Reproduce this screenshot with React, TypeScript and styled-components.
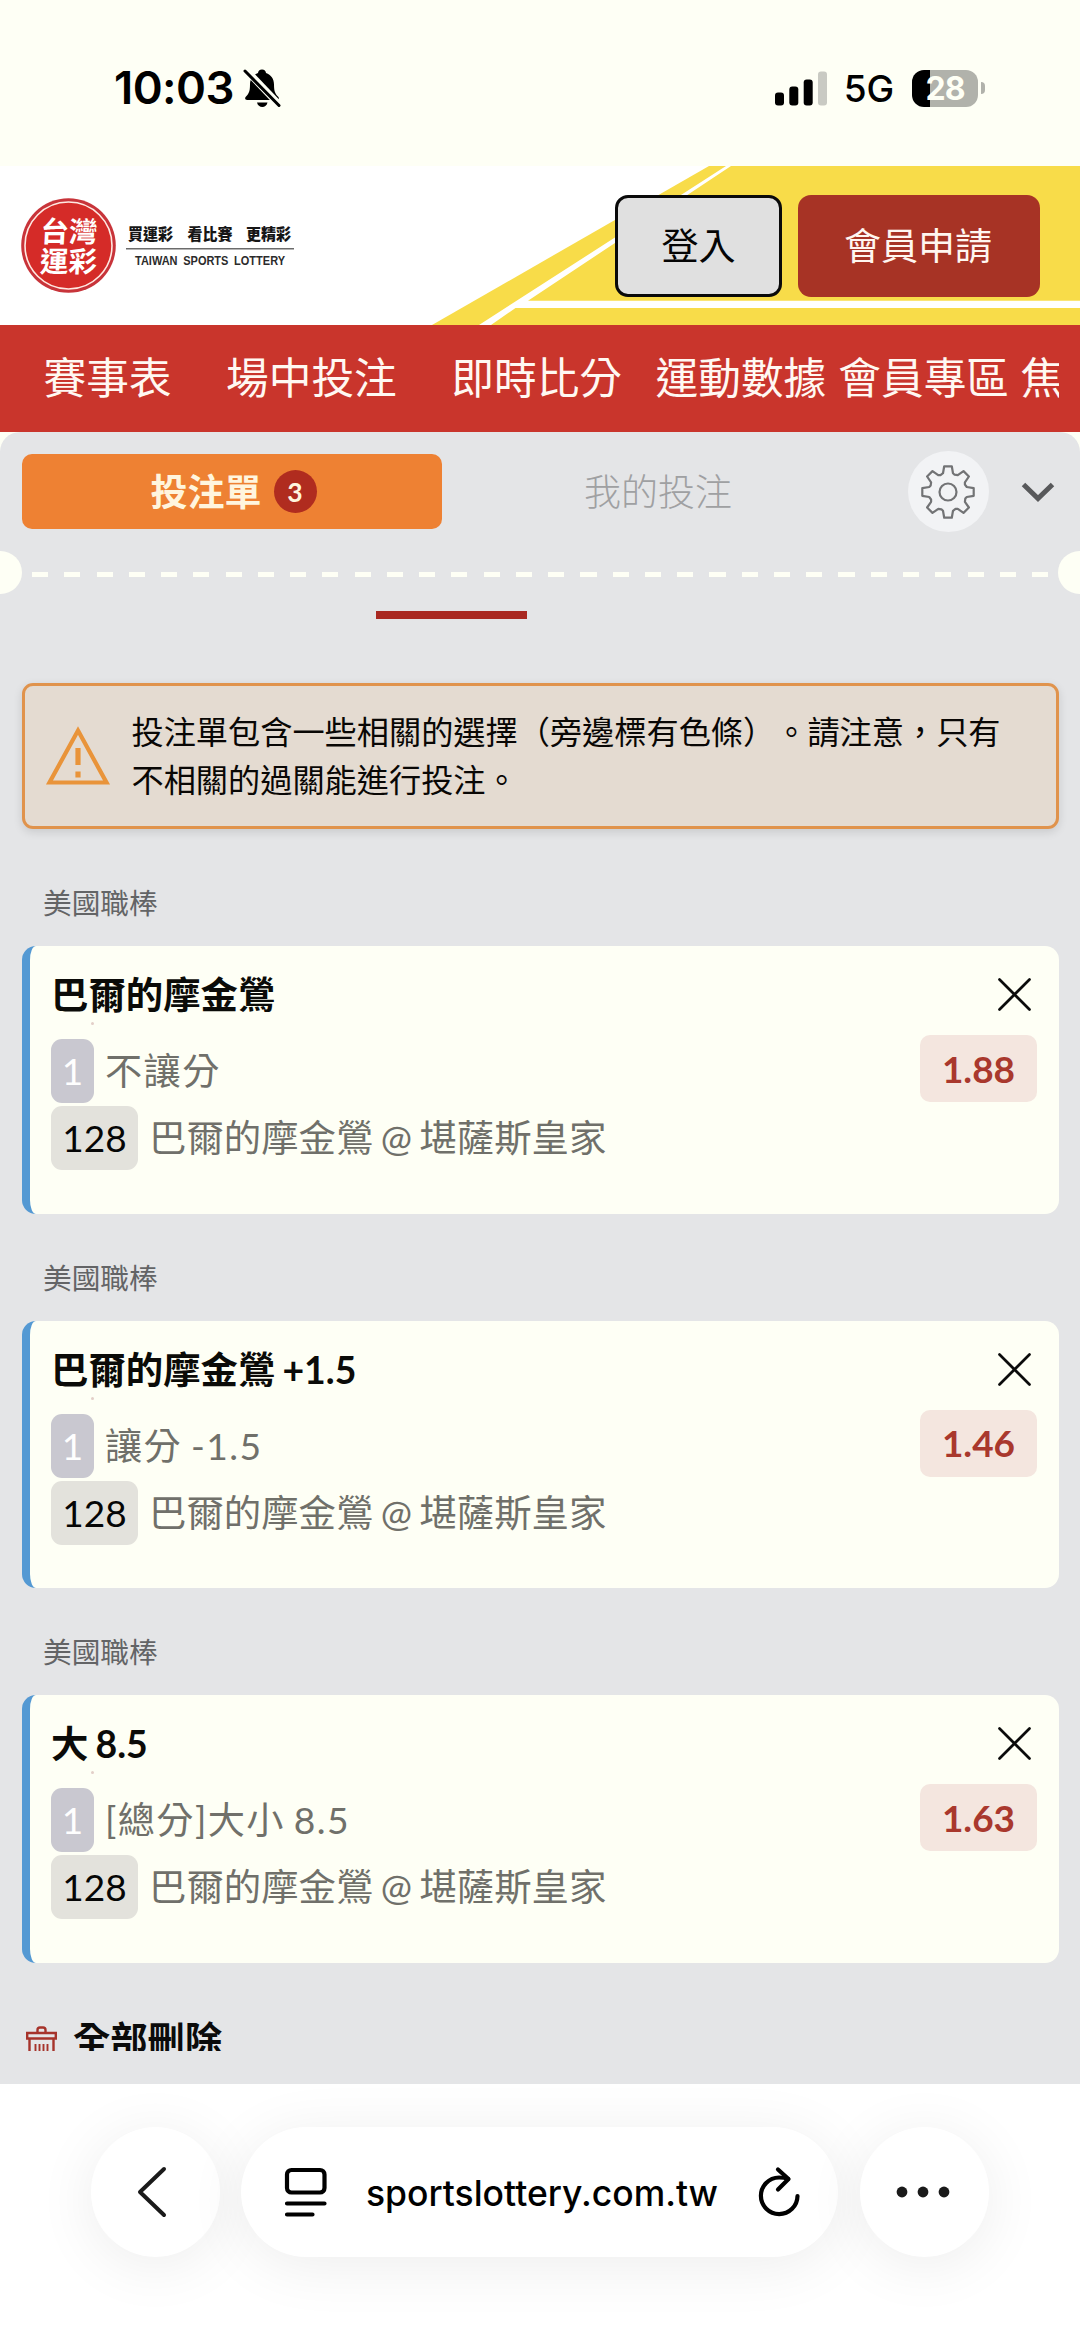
import React from "react";
import styled, { createGlobalStyle } from "styled-components";

const CREAM = "#fefff5";
const PANEL = "#e4e5e7";
const CJK = `"Lato", "Noto Sans CJK TC", sans-serif`;

const GlobalStyle = createGlobalStyle`
  * { box-sizing: border-box; }
  html, body { margin: 0; padding: 0; background: #fff; }
  button { font: inherit; border: 0; padding: 0; background: none; cursor: pointer; }
`;

const Screen = styled.div`
  width: 1080px;
  height: 2348px;
  overflow: hidden;
  display: flex;
  flex-direction: column;
  background: ${CREAM};
  font-family: ${CJK};
  color: #0b0b0b;
`;

/* ---------- status bar ---------- */

const StatusBar = styled.div`
  height: 166px;
  flex: none;
  display: flex;
  align-items: center;
  justify-content: space-between;
  padding: 10px 95px 0 114px;
  font-family: "Inter", sans-serif;
  color: #000;
`;

const StatusGroup = styled.div`
  display: flex;
  align-items: center;
`;

const Clock = styled.span`
  font-size: 45.5px;
  font-weight: 600;
  letter-spacing: -0.6px;
  line-height: 48px;
  margin-right: 9px;
`;

const Network = styled.span`
  font-size: 37px;
  font-weight: 500;
  line-height: 40px;
  letter-spacing: -0.2px;
  margin: 2px 18px 0 17px;
`;

const Battery = styled.div`
  display: flex;
  align-items: center;
  gap: 3px;
`;

const BatteryBody = styled.div<{ $level: number }>`
  width: 66px;
  height: 37px;
  border-radius: 12px;
  display: flex;
  align-items: center;
  justify-content: center;
  background: linear-gradient(
    to right,
    #000 ${(p) => p.$level}%,
    #b1b2ab ${(p) => p.$level}%
  );
  color: ${CREAM};
  font-size: 32px;
  font-weight: 700;
  line-height: 37px;
  letter-spacing: -1px;
`;

const BatteryTip = styled.div`
  width: 4px;
  height: 12px;
  border-radius: 0 4px 4px 0;
  background: #b1b2ab;
`;

/* ---------- site header ---------- */

const Header = styled.header`
  position: relative;
  height: 159px;
  flex: none;
  display: flex;
  justify-content: space-between;
  align-items: flex-start;
  padding: 29px 40px 0 20px;
  background: #fff;
`;

const HeaderArt = styled.svg`
  position: absolute;
  inset: 0;
`;

const Logo = styled.svg`
  position: relative;
  display: block;
`;

const HeaderActions = styled.div`
  position: relative;
  display: flex;
  gap: 16px;
`;

const HeaderButton = styled.button<{ $primary?: boolean }>`
  width: ${(p) => (p.$primary ? 242 : 167)}px;
  height: 102px;
  border-radius: 13px;
  border: ${(p) => (p.$primary ? "0" : "3px solid #0a0a0a")};
  background: ${(p) => (p.$primary ? "#a73325" : "#e0e0e0")};
  color: ${(p) => (p.$primary ? "#fff6f0" : "#050505")};
  font-size: 37px;
  line-height: 44px;
  padding-right: ${(p) => (p.$primary ? 2 : 0)}px;
`;

const Nav = styled.nav`
  height: 107px;
  flex: none;
  display: flex;
  align-items: center;
  padding: 0 20px 1px 43.5px;
  background: #c9352c;
`;

const NavList = styled.div`
  display: flex;
  overflow: hidden;
  width: 1015.5px;
`;

const NavItem = styled.a<{ $gap: number }>`
  flex: none;
  font-size: 42.7px;
  line-height: 60px;
  color: #fff8f2;
  white-space: nowrap;
  margin-right: ${(p) => p.$gap}px;
`;

/* ---------- bet slip ---------- */

const Slip = styled.main`
  height: 1652px;
  flex: none;
  display: flex;
  flex-direction: column;
  background: ${PANEL};
  border-radius: 20px 20px 0 0;
`;

const TabBar = styled.div`
  height: 119px;
  flex: none;
  display: flex;
  align-items: center;
  padding: 19px 24px 19px 21.5px;
`;

const ActiveTab = styled.button`
  width: 420px;
  height: 75px;
  border-radius: 10px;
  background: #ee8133;
  color: #fff5de;
  display: flex;
  align-items: center;
  justify-content: center;
  gap: 12px;
  padding-left: 4px;
  font-size: 37px;
  line-height: 44px;
  font-weight: 700;
`;

const CountBadge = styled.span`
  width: 43px;
  height: 43px;
  border-radius: 50%;
  background: #b02c1f;
  display: flex;
  align-items: center;
  justify-content: center;
  font-size: 26.5px;
  line-height: 28px;
`;

const IdleTab = styled.button`
  width: 435px;
  text-align: center;
  padding-right: 2px;
  font-size: 37px;
  line-height: 44px;
  font-weight: 300;
  color: #9fa0a2;
`;

const GearButton = styled.button`
  width: 81px;
  height: 81px;
  margin-left: 31px;
  border-radius: 50%;
  background: #f2f3f5;
  display: flex;
  align-items: center;
  justify-content: center;
`;

const CollapseButton = styled.button`
  display: flex;
  margin-left: 31px;
`;

const Perforation = styled.div`
  height: 43px;
  flex: none;
  display: flex;
  align-items: center;
  justify-content: space-between;
  overflow: hidden;
`;

const Notch = styled.span<{ $side: "left" | "right" }>`
  width: 22px;
  height: 43px;
  background: ${CREAM};
  border-radius: ${(p) => (p.$side === "left" ? "0 22px 22px 0" : "22px 0 0 22px")};
`;

const Dashes = styled.div`
  width: 1016px;
  height: 5px;
  margin-top: 4px;
  background: repeating-linear-gradient(
    to right,
    ${CREAM} 0 16.1px,
    transparent 16.1px 32.26px
  );
`;

const TabIndicator = styled.div`
  flex: none;
  width: 151px;
  height: 8px;
  margin: 17px 0 0 376px;
  background: #a92922;
`;

const Notice = styled.section`
  flex: none;
  height: 146px;
  margin: 64px 21px 0 21.5px;
  border: 3px solid #e0934c;
  border-radius: 11px;
  background: #e4dbd1;
  box-shadow: 0 3px 10px rgba(0, 0, 0, 0.12);
  display: flex;
  align-items: center;
  padding-left: 20px;
`;

const NoticeText = styled.p`
  margin: -4px 0 0 21px;
  font-family: "Noto Sans CJK TC", sans-serif;
  font-size: 32.2px;
  line-height: 48px;
  color: #090705;
  white-space: nowrap;
  text-spacing-trim: space-all;
`;

const Picks = styled.div`
  flex: none;
  display: flex;
  flex-direction: column;
`;

const League = styled.h3`
  margin: 0;
  height: 107px;
  padding: 48px 0 0 43px;
  font-size: 28.7px;
  line-height: 32px;
  font-weight: 400;
  color: #636466;
`;

const PickGroup = styled.section<{ $first?: boolean }>`
  margin-top: ${(p) => (p.$first ? 10 : 0)}px;
`;

const Card = styled.article`
  height: 267.5px;
  margin: 0 21px 0 21.5px;
  border-left: 8px solid #5499d3;
  border-radius: 14px;
  background: ${CREAM};
  display: flex;
  justify-content: space-between;
  padding: 0 22px 0 21.5px;
`;

const CardMain = styled.div`
  position: relative;
  display: flex;
  flex-direction: column;
  align-items: flex-start;
  padding-top: 27px;
`;

const CardSide = styled.div`
  display: flex;
  flex-direction: column;
  align-items: flex-end;
  padding-top: 32px;
`;

const PickTitle = styled.h2`
  margin: 0 0 22px 0;
  height: 44px;
  font-size: 37.4px;
  line-height: 44px;
  font-weight: 700;
  word-spacing: -2px;
  color: #0b0b08;
`;

const Speck = styled.i`
  position: absolute;
  left: 40px;
  top: 76px;
  width: 3px;
  height: 3px;
  border-radius: 50%;
  background: #e3cfc8;
`;

const Row = styled.div`
  display: flex;
  align-items: center;
  height: 64px;
  margin-bottom: 3px;
`;

const Chip = styled.span<{ $tone: "market" | "event" }>`
  width: ${(p) => (p.$tone === "market" ? 43 : 87)}px;
  height: 64px;
  border-radius: 11px;
  display: flex;
  align-items: center;
  justify-content: center;
  font-size: 37px;
  line-height: 44px;
  background: ${(p) => (p.$tone === "market" ? "#c9c8d0" : "#e3e2dc")};
  color: ${(p) => (p.$tone === "market" ? "#fefefe" : "#060606")};
`;

const RowText = styled.span<{ $wide?: boolean }>`
  margin-left: 11px;
  font-size: ${(p) => (p.$wide ? 37.2 : 37.4)}px;
  letter-spacing: ${(p) => (p.$wide ? 1.4 : 0)}px;
  word-spacing: ${(p) => (p.$wide ? -2 : -2.2)}px;
  line-height: 44px;
  color: #70706a;
  white-space: nowrap;
`;

const CloseButton = styled.button`
  display: flex;
  margin-right: 6px;
`;

const Odds = styled.span`
  width: 117px;
  height: 67px;
  margin-top: 24px;
  border-radius: 10px;
  background: #f4e6df;
  color: #a9382d;
  display: flex;
  align-items: center;
  justify-content: center;
  font-size: 37px;
  line-height: 44px;
  font-weight: 700;
`;

const ClearAll = styled.button`
  flex: none;
  margin: 57px 0 0 26px;
  height: 31px;
  overflow: hidden;
  display: flex;
  align-items: flex-start;
  font-size: 37.3px;
  line-height: 40px;
  font-weight: 700;
  color: #0b0b0b;
  gap: 16px;
`;

const TrashIcon = styled.svg`
  margin-top: 6px;
  flex: none;
`;

/* ---------- browser toolbar ---------- */

const Toolbar = styled.footer`
  flex: 1;
  display: flex;
  align-items: flex-start;
  padding: 43px 0 0 91px;
  overflow: hidden;
  background: #fff;
`;

const floating = "0 8px 60px rgba(0, 0, 0, 0.075)";

const RoundButton = styled.button<{ $nudge: number }>`
  width: 129px;
  height: 130px;
  border-radius: 65px;
  background: #fff;
  box-shadow: ${floating};
  display: flex;
  align-items: center;
  justify-content: center;
  padding-right: ${(p) => p.$nudge}px;
`;

const AddressBar = styled.div`
  width: 597px;
  height: 130px;
  margin: 0 22px 0 21px;
  border-radius: 65px;
  background: #fff;
  box-shadow: ${floating};
  display: flex;
  align-items: center;
  justify-content: space-between;
  padding: 0 37px 0 43px;
`;

const Url = styled.span`
  font-family: "Inter", sans-serif;
  font-size: 35.5px;
  font-weight: 500;
  line-height: 44px;
  color: #000;
  padding-top: 4px;
`;

const BellOff = () => (
  <svg width="38" height="40" viewBox="0 0 38 40">
    <path
      d="M19 1.500c2.400 0 4 1.600 4 3.600 5 1.600 8 6 8 11.400 0 7.500 1.400 9.400 4.200 12.300 1.300 1.400.6 3.200-1.400 3.200H4.200c-2 0-2.700-1.800-1.400-3.200C5.600 25.900 7 24 7 16.500 7 11.100 10 6.700 15 5.100c0-2 1.600-3.600 4-3.600Z"
      fill="#000"
    />
    <path d="M14 34.500h10.500c-.6 2.900-2.700 4.500-5.200 4.500s-4.700-1.600-5.300-4.500Z" fill="#000" />
    <path d="M3.500 2.500 36.500 37" stroke={CREAM} strokeWidth="7" />
    <path d="M2 3 36 37.500" stroke="#000" strokeWidth="3" strokeLinecap="round" />
  </svg>
);

const Signal = () => (
  <svg width="52" height="35" viewBox="0 0 52 35">
    <rect x="0" y="21.500" width="9" height="13" rx="3" />
    <rect x="14.300" y="15.500" width="9" height="19" rx="3" />
    <rect x="28.700" y="8.500" width="9" height="26" rx="3" />
    <rect x="43" y="0.500" width="9" height="34" rx="3" fill="#c9cac3" />
  </svg>
);

const Gear = () => {
  const teeth = 8;
  const tooth = [
    [-24, 18.5],
    [-15, 19.5],
    [-8.5, 26],
    [8.5, 26],
    [15, 19.5],
  ];
  const points: string[] = [];
  for (let i = 0; i < teeth; i++) {
    for (const [deg, r] of tooth) {
      const a = ((i * 45 + deg - 90) * Math.PI) / 180;
      points.push(`${(27 + r * Math.cos(a)).toFixed(1)},${(27 + r * Math.sin(a)).toFixed(1)}`);
    }
  }
  return (
    <svg width="54" height="54" viewBox="0 0 54 54" fill="none" stroke="#727375" strokeWidth="2.200" strokeLinejoin="round">
      <polygon points={points.join(" ")} />
      <circle cx="27" cy="27" r="8.500" />
    </svg>
  );
};

const Close = () => (
  <svg width="33" height="33" viewBox="0 0 33 33" stroke="#0b0b0b" strokeWidth="2.700" strokeLinecap="round">
    <path d="M1.500 1.500 31.500 31.500M31.500 1.500 1.500 31.500" />
  </svg>
);

const navItems = [
  { label: "賽事表", gap: 54.5 },
  { label: "場中投注", gap: 54.5 },
  { label: "即時比分", gap: 33.5 },
  { label: "運動數據", gap: 12 },
  { label: "會員專區", gap: 11.5 },
  { label: "焦", gap: 0 },
];

const picks = [
  { title: "巴爾的摩金鶯", market: "不讓分", odds: "1.88" },
  { title: "巴爾的摩金鶯 +1.5", market: "讓分 -1.5", odds: "1.46" },
  { title: "大 8.5", market: "[總分]大小 8.5", odds: "1.63" },
];

export default function App() {
  return (
    <Screen lang="zh-Hant-TW">
      <GlobalStyle />
      <StatusBar>
        <StatusGroup>
          <Clock>10:03</Clock>
          <BellOff />
        </StatusGroup>
        <StatusGroup>
          <Signal />
          <Network>5G</Network>
          <Battery>
            <BatteryBody $level={28}>28</BatteryBody>
            <BatteryTip />
          </Battery>
        </StatusGroup>
      </StatusBar>

      <Header>
        <HeaderArt width="1080" height="159" viewBox="0 0 1080 159">
          <polygon points="709,0 1080,0 1080,159 432,159" fill="#f8dc49" />
          <polygon points="726,0 731,0 528,134.700 1080,134.700 1080,142 515.500,142 491,159 479,159" fill="#fff" />
        </HeaderArt>
        <Logo width="280" height="100" viewBox="0 0 280 100">
          <circle cx="48.500" cy="50.500" r="47.300" fill="#c8343a" />
          <circle cx="48.500" cy="50.500" r="43.500" fill="#d52b28" stroke="#ffe9e2" strokeWidth="1.600" />
          <g fill="#fff" fontSize="28.500" fontWeight="700" transform="skewX(-3)">
            <text x="22.500" y="47.500" textLength="57">台灣</text>
            <text x="23.500" y="77" textLength="57">運彩</text>
          </g>
          <g fill="#161616" fontSize="15.500" fontWeight="900">
            <text x="108" y="45" textLength="45" lengthAdjust="spacingAndGlyphs">買運彩</text>
            <text x="167.500" y="45" textLength="45" lengthAdjust="spacingAndGlyphs">看比賽</text>
            <text x="226" y="45" textLength="45" lengthAdjust="spacingAndGlyphs">更精彩</text>
          </g>
          <rect x="106" y="53" width="168" height="1.500" fill="#6b6b6b" />
          <text
            x="115"
            y="69.500"
            textLength="150"
            lengthAdjust="spacingAndGlyphs"
            fontFamily="Liberation Sans, sans-serif"
            fontWeight="700"
            fontSize="12.500"
            wordSpacing="3"
            fill="#2b2b2b"
          >
            TAIWAN SPORTS LOTTERY
          </text>
        </Logo>
        <HeaderActions>
          <HeaderButton>登入</HeaderButton>
          <HeaderButton $primary>會員申請</HeaderButton>
        </HeaderActions>
      </Header>

      <Nav>
        <NavList>
          {navItems.map((n) => (
            <NavItem key={n.label} $gap={n.gap}>
              {n.label}
            </NavItem>
          ))}
        </NavList>
      </Nav>

      <Slip>
        <TabBar>
          <ActiveTab>
            投注單<CountBadge>3</CountBadge>
          </ActiveTab>
          <IdleTab>我的投注</IdleTab>
          <GearButton aria-label="設定">
            <Gear />
          </GearButton>
          <CollapseButton aria-label="收合">
            <svg width="36" height="22" viewBox="0 0 36 22" fill="none" stroke="#58595b" strokeWidth="5">
              <path d="M3.500 3.500 18 17.500 32.500 3.500" />
            </svg>
          </CollapseButton>
        </TabBar>

        <Perforation>
          <Notch $side="left" />
          <Dashes />
          <Notch $side="right" />
        </Perforation>
        <TabIndicator />

        <Notice>
          <svg width="66" height="64" viewBox="0 0 66 64" fill="none">
            <path d="M33 6.500 61.500 58.500H4.500Z" stroke="#e9943a" strokeWidth="4.200" />
            <path d="M33 24v17M33 47.500v6" stroke="#e9943a" strokeWidth="5.200" />
          </svg>
          <NoticeText>
            投注單包含一些相關的選擇（旁邊標有色條）。請注意，只有
            <br />
            不相關的過關能進行投注。
          </NoticeText>
        </Notice>

        <Picks>
          {picks.map((p, i) => (
            <PickGroup key={p.title} $first={i === 0}>
              <League>美國職棒</League>
              <Card>
                <CardMain>
                  <PickTitle>{p.title}</PickTitle>
                  <Speck />
                  <Row>
                    <Chip $tone="market">1</Chip>
                    <RowText $wide>{p.market}</RowText>
                  </Row>
                  <Row>
                    <Chip $tone="event">128</Chip>
                    <RowText>巴爾的摩金鶯 @ 堪薩斯皇家</RowText>
                  </Row>
                </CardMain>
                <CardSide>
                  <CloseButton aria-label="移除">
                    <Close />
                  </CloseButton>
                  <Odds>{p.odds}</Odds>
                </CardSide>
              </Card>
            </PickGroup>
          ))}
        </Picks>

        <ClearAll>
          <TrashIcon width="31" height="34" viewBox="0 0 31 34" fill="none" stroke="#a6332b" strokeWidth="2.400">
            <path d="M1.200 7h28.600v5.500H1.200ZM3.500 12.500v21h24V12.500M11.500 7V4a2.500 2.500 0 0 1 2.500-2.500h3A2.500 2.500 0 0 1 19.500 4v3" />
            <path d="M9.500 18v13M13.500 18v13M17.500 18v13M21.500 18v13" strokeWidth="1.900" />
          </TrashIcon>
          全部刪除
        </ClearAll>
      </Slip>

      <Toolbar>
        <RoundButton $nudge={5} aria-label="返回">
          <svg width="32" height="52" viewBox="0 0 32 52" fill="none" stroke="#1a1a1a" strokeWidth="4" strokeLinecap="round" strokeLinejoin="round">
            <path d="M27 3 3 26 27 49" />
          </svg>
        </RoundButton>
        <AddressBar>
          <svg width="43" height="50" viewBox="0 0 43 50" fill="none" stroke="#000" strokeWidth="4.200" strokeLinecap="round">
            <rect x="3" y="3" width="37.500" height="22.500" rx="4.500" />
            <path d="M3 36.500h37.500M3 47.500h25.500" />
          </svg>
          <Url>sportslottery.com.tw</Url>
          <svg width="44" height="52" viewBox="0 0 44 52" fill="none" stroke="#000" strokeWidth="4.200" strokeLinecap="round" strokeLinejoin="round">
            <path d="M40.500 30A18.300 18.300 0 1 1 22 11.500Q27.500 11.500 31 13" />
            <path d="M21 3.500 31.500 13 21 23.500" />
          </svg>
        </AddressBar>
        <RoundButton $nudge={3} aria-label="更多">
          <svg width="56" height="12" viewBox="0 0 56 12" fill="#1a1a1a">
            <circle cx="7" cy="6" r="5.400" />
            <circle cx="28" cy="6" r="5.400" />
            <circle cx="49" cy="6" r="5.400" />
          </svg>
        </RoundButton>
      </Toolbar>
    </Screen>
  );
}
